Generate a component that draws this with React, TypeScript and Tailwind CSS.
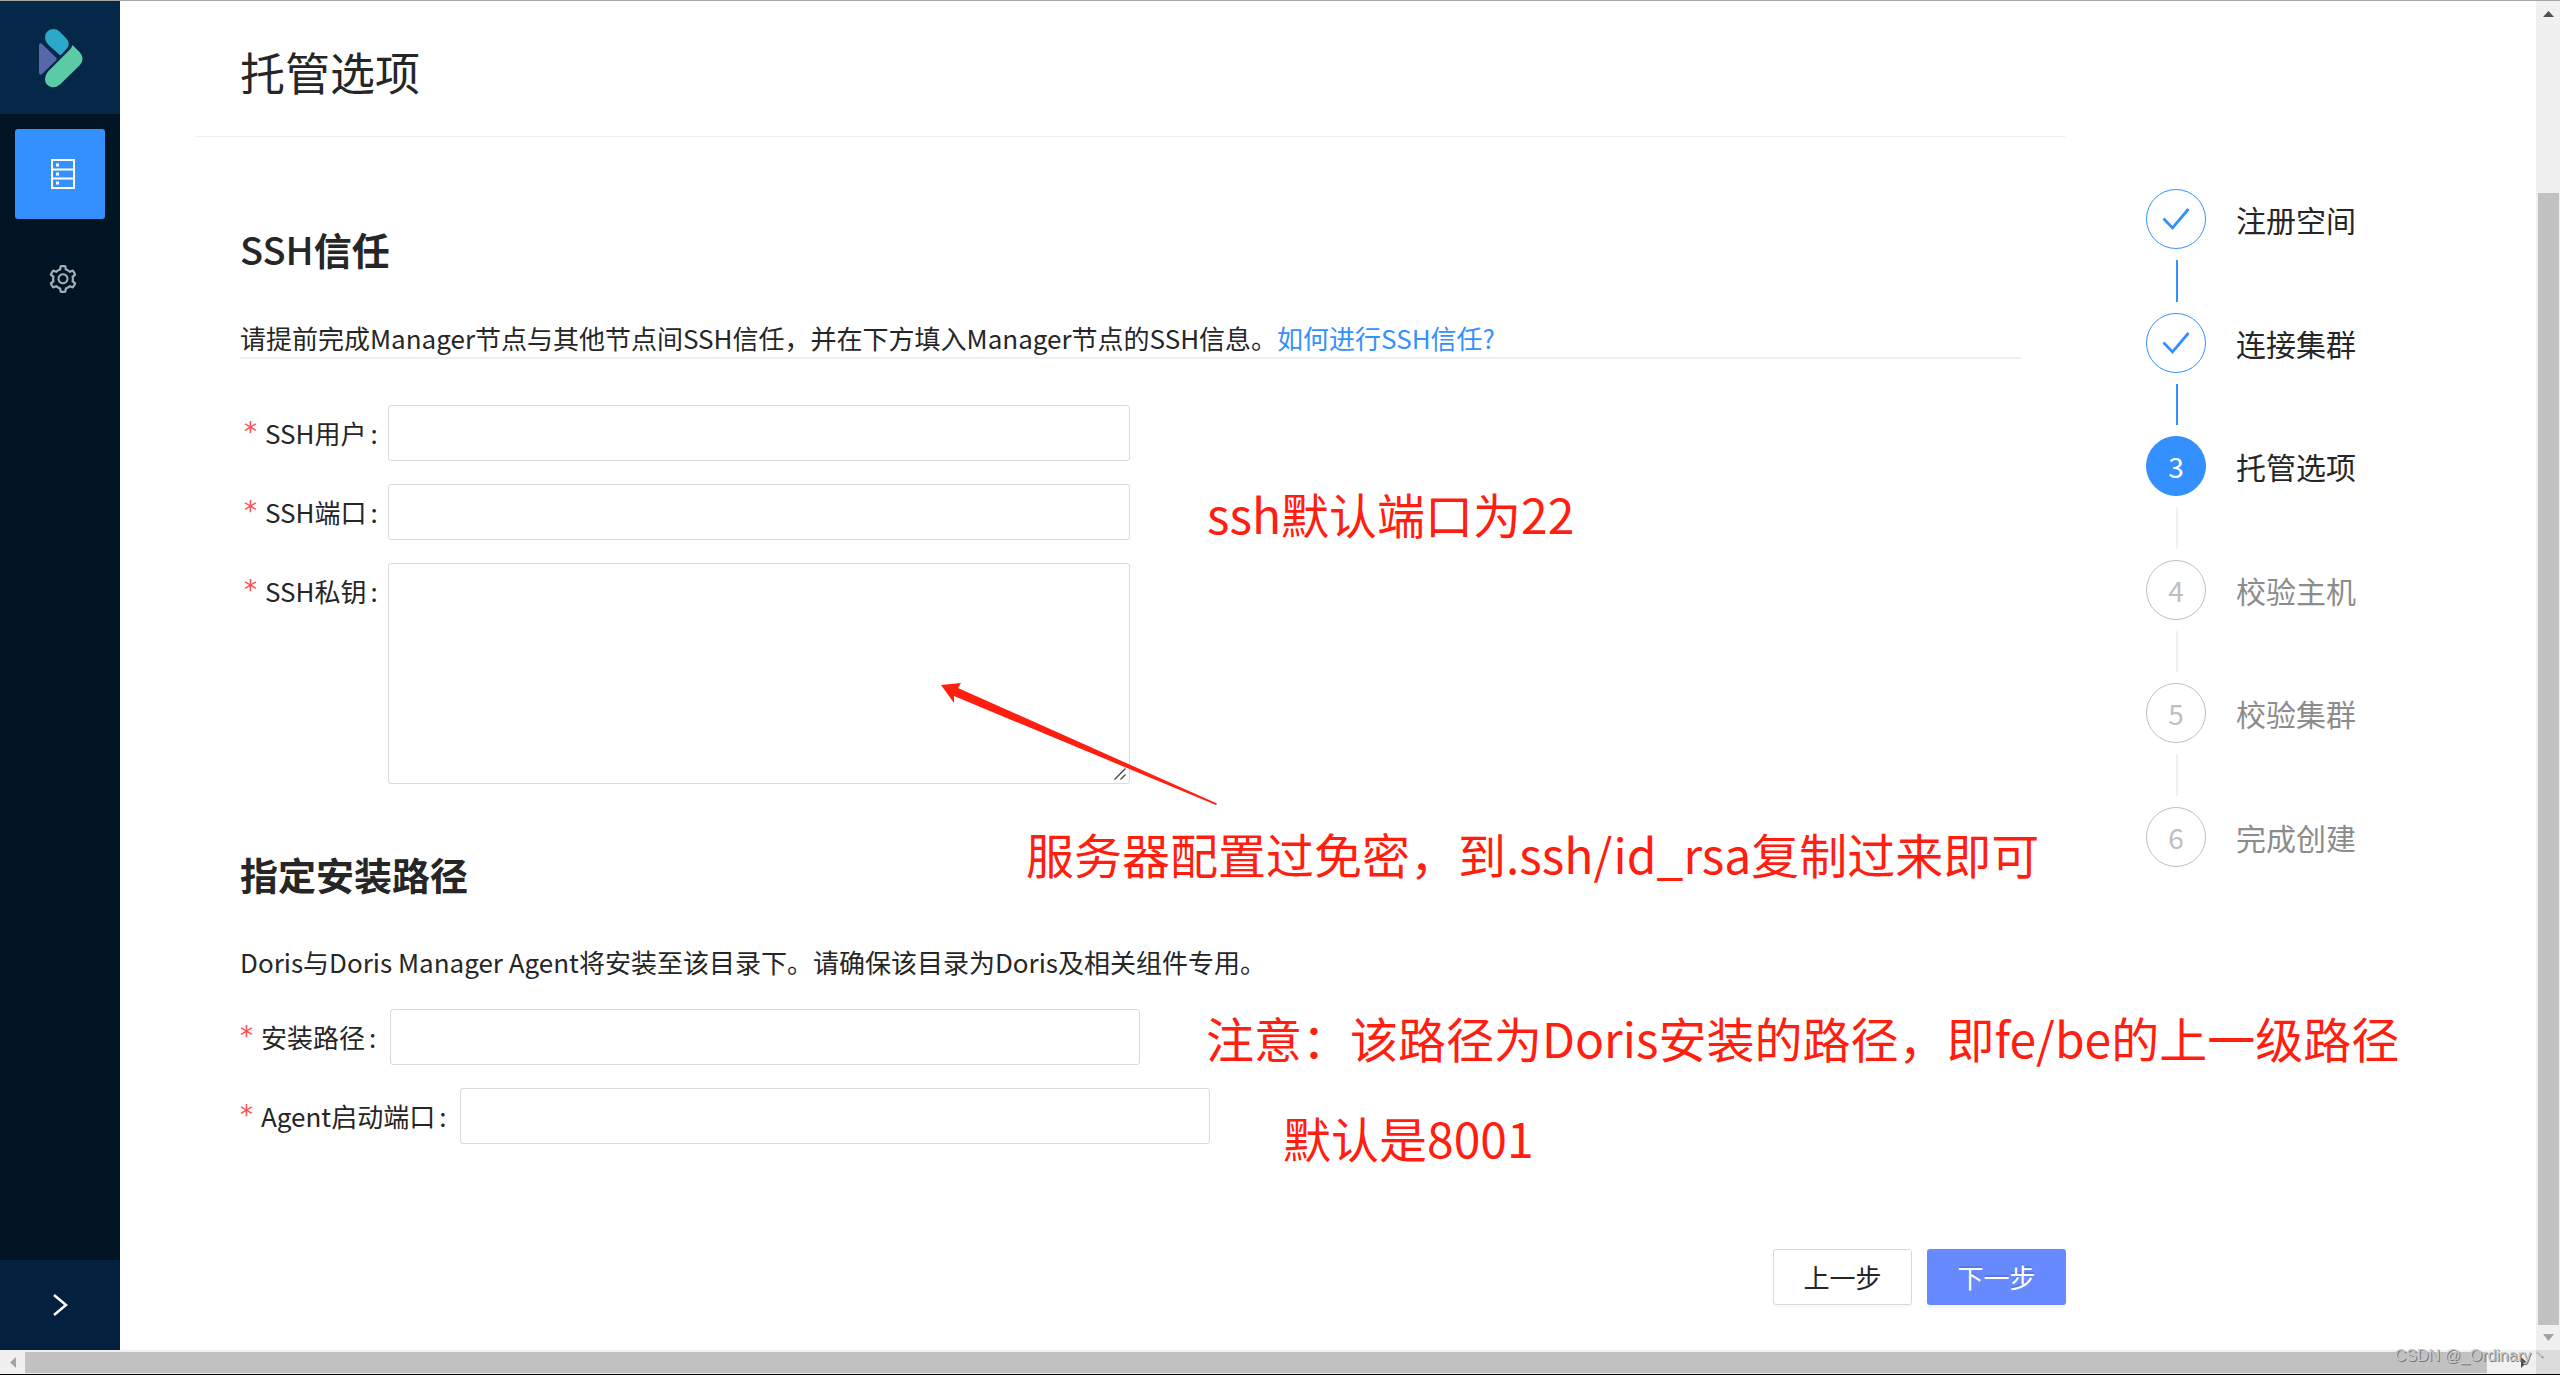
import React from "react";

type StepState = "done" | "active" | "wait";

const steps: { title: string; state: StepState }[] = [
  { title: "注册空间", state: "done" },
  { title: "连接集群", state: "done" },
  { title: "托管选项", state: "active" },
  { title: "校验主机", state: "wait" },
  { title: "校验集群", state: "wait" },
  { title: "完成创建", state: "wait" },
];

const circleStyles: Record<StepState, string> = {
  done: "border-[#3490ff] bg-white text-[#3490ff]",
  active: "border-[#3490ff] bg-[#3490ff] text-white",
  wait: "border-[#bfbfbf] bg-white text-[#bfbfbf]",
};

function Logo() {
  return (
    <svg className="h-[60px] w-[46px]" viewBox="0 0 46 60" aria-hidden="true">
      <path d="M2 18Q2 14 5 16L19 29.500Q20.500 31 19 32.500L5 46Q2 48 2 44Z" fill="#5668aa" />
      <path d="M12 17.500Q8 13.500 8 9Q9 1 17 1Q20 1 23 4L29 10Q34.500 16 29 21.500L23.500 27.500Z" fill="#2ba9cb" />
      <path d="M35.500 17L43 24.500Q48 31 43 37L23 56.500Q19 60 14 59Q8 57 8 51Q8 47 11 43.500L32 22.500Q35 19.500 35.500 17Z" fill="#5bcba5" />
    </svg>
  );
}

function ServerIcon() {
  return (
    <svg className="h-[30px] w-6" viewBox="0 0 24 30" fill="none" stroke="#fff" strokeWidth="2" aria-hidden="true">
      <rect x="1" y="1" width="22" height="28" />
      <path d="M1 10.500H23M1 19.500H23" />
      <path d="M5 6H8M5 15H8M5 24H8" strokeWidth="3" />
    </svg>
  );
}

function GearIcon() {
  return (
    <svg className="size-8" viewBox="0 0 1024 1024" fill="#a6adb4" aria-hidden="true">
      <path d="M924.800 625.700l-65.500-56c3.100-19 4.700-38.400 4.700-57.800s-1.600-38.800-4.700-57.800l65.500-56a32.030 32.030 0 0 0 9.300-35.200l-.9-2.600a443.740 443.740 0 0 0-79.700-137.900l-1.800-2.100a32.120 32.120 0 0 0-35.100-9.500l-81.300 28.900c-30-24.600-63.500-44-99.700-57.600l-15.700-85a32.050 32.050 0 0 0-25.800-25.700l-2.700-.5c-52.100-9.400-106.900-9.400-159 0l-2.700.5a32.050 32.050 0 0 0-25.800 25.700l-15.800 85.400a351.860 351.860 0 0 0-99 57.400l-81.900-29.100a32 32 0 0 0-35.100 9.500l-1.800 2.100a446.020 446.020 0 0 0-79.700 137.900l-.9 2.600c-4.500 12.500-.8 26.500 9.300 35.200l66.300 56.600c-3.100 18.800-4.600 38-4.600 57.100 0 19.200 1.500 38.400 4.600 57.100L99 625.500a32.030 32.030 0 0 0-9.300 35.200l.9 2.600c18.100 50.400 44.900 96.900 79.700 137.900l1.800 2.100a32.120 32.120 0 0 0 35.100 9.500l81.900-29.100c29.800 24.500 63.100 43.900 99 57.400l15.800 85.400a32.050 32.050 0 0 0 25.800 25.700l2.700.5a449.400 449.400 0 0 0 159 0l2.700-.5a32.050 32.050 0 0 0 25.800-25.700l15.700-85a350 350 0 0 0 99.700-57.600l81.300 28.900a32 32 0 0 0 35.100-9.500l1.800-2.100c34.800-41.100 61.600-87.500 79.700-137.900l.9-2.600c4.500-12.300.8-26.300-9.300-35zM788.300 465.900c2.500 15.100 3.800 30.600 3.800 46.100s-1.300 31-3.800 46.100l-6.600 40.100 74.700 63.900a370.030 370.030 0 0 1-42.600 73.600L721 702.800l-31.400 25.800c-23.900 19.600-50.500 35-79.300 45.800l-38.100 14.300-17.900 97a377.500 377.500 0 0 1-85 0l-17.900-97.200-37.800-14.500c-28.500-10.800-55-26.200-78.700-45.700l-31.400-25.900-93.400 33.200c-17-22.900-31.200-47.600-42.600-73.600l75.500-64.500-6.500-40c-2.400-14.900-3.700-30.300-3.700-45.500 0-15.300 1.200-30.600 3.700-45.500l6.500-40-75.500-64.500c11.300-26.100 25.600-50.700 42.600-73.600l93.400 33.200 31.400-25.900c23.700-19.500 50.200-34.900 78.700-45.700l37.900-14.300 17.900-97.200c28.100-3.200 56.800-3.200 85 0l17.900 97 38.100 14.300c28.700 10.800 55.400 26.200 79.300 45.800l31.400 25.800 92.800-32.900c17 22.900 31.200 47.600 42.600 73.600L781.800 426l6.500 39.900zM512 326c-97.200 0-176 78.800-176 176s78.800 176 176 176 176-78.800 176-176-78.800-176-176-176zm79.200 255.200A111.600 111.600 0 0 1 512 614c-29.900 0-58-11.700-79.200-32.800A111.600 111.600 0 0 1 400 502c0-29.900 11.700-58 32.800-79.200C454 401.600 482.100 390 512 390c29.900 0 58 11.600 79.200 32.800A111.600 111.600 0 0 1 624 502c0 29.900-11.700 58-32.800 79.200z" />
    </svg>
  );
}

function FieldLabel({ htmlFor, text, className }: { htmlFor: string; text: string; className: string }) {
  return (
    <label htmlFor={htmlFor} className={"flex h-14 shrink-0 items-center pb-[2px] " + className}>
      <span className="mr-2 font-['DejaVu_Sans',sans-serif] text-[#ff4d4f]">*</span>
      <span className="whitespace-nowrap">{text}</span>
      <span className="ml-1">:</span>
    </label>
  );
}

const inputClass = "block h-14 rounded-[3px] border border-[#d9d9d9] bg-white px-4 outline-none";

function Note({ className, children }: { className: string; children: React.ReactNode }) {
  return (
    <p className={"absolute text-5xl leading-[64px] whitespace-nowrap text-[#ff1e10] " + className}>{children}</p>
  );
}

function Sidebar() {
  return (
    <aside className="flex w-[120px] shrink-0 flex-col bg-[#001424]">
      <div className="flex h-[113px] shrink-0 items-center justify-center bg-[#052849]">
        <Logo />
      </div>
      <nav className="flex flex-1 flex-col items-center gap-[15px] pt-[15px]">
        <button type="button" aria-label="集群" className="flex size-[90px] items-center justify-center rounded-[3px] bg-[#3490ff] pl-[6px]">
          <ServerIcon />
        </button>
        <button type="button" aria-label="设置" className="flex size-[90px] items-center justify-center pl-[6px]">
          <GearIcon />
        </button>
      </nav>
      <button type="button" aria-label="展开" className="flex h-[90px] shrink-0 items-center justify-center bg-[#03203e]">
        <svg className="h-[22px] w-4" viewBox="0 0 16 22" fill="none" stroke="#fff" strokeWidth="2.500" aria-hidden="true">
          <path d="M2 1L14 11L2 21" />
        </svg>
      </button>
    </aside>
  );
}

function Steps() {
  return (
    <ol className="mt-[188px] ml-20 flex h-[678px] w-[390px] shrink-0 flex-col">
      {steps.map((s, i) => (
        <li key={s.title} className="flex flex-col not-last:flex-1">
          <div className="flex items-center gap-[30px]">
            <span className={"flex size-[60px] items-center justify-center rounded-full border text-[28px] " + circleStyles[s.state]}>
              {s.state === "done" ? (
                <svg className="h-[24px] w-[28px]" viewBox="0 0 28 24" fill="none" stroke="currentColor" strokeWidth="2.800" aria-hidden="true">
                  <path d="M1.500 11.500L10.500 21L26.500 2" />
                </svg>
              ) : (
                <span>{i + 1}</span>
              )}
            </span>
            <span className={"text-[30px] leading-10 " + (s.state === "wait" ? "text-[#8c8c8c]" : "text-[#262626]")}>{s.title}</span>
          </div>
          {i < steps.length - 1 && (
            <span className={"my-[11px] ml-[30px] w-[2px] flex-1 " + (s.state === "done" ? "bg-[#3490ff]" : "bg-[#f0f0f0]")} />
          )}
        </li>
      ))}
    </ol>
  );
}

function HostingForm() {
  return (
    <form className="min-w-0 flex-1" onSubmit={(e) => e.preventDefault()}>
      <h1 className="flex h-[136px] items-center border-b border-[#f0f0f0] pt-[6px] pl-[45px] text-[45px] leading-[60px]">托管选项</h1>
      <section className="mt-[84px] px-[45px]">
        <h2 className="text-[38px] leading-[56px] font-bold">
          <span className="font-medium">SSH</span>信任
        </h2>
        <p className="mt-[41px] h-[41px] border-b-2 border-[#f0f0f0] leading-10 whitespace-nowrap">
          请提前完成Manager节点与其他节点间SSH信任，并在下方填入Manager节点的SSH信息。
          <a href="#ssh" className="text-[#3490ff]">如何进行SSH信任?</a>
        </p>
        <div className="mt-[46px] flex flex-col gap-[23px]">
          <div className="flex">
            <FieldLabel htmlFor="ssh-user" text="SSH用户" className="w-[148px] pl-1" />
            <input id="ssh-user" type="text" className={inputClass + " w-[742px]"} />
          </div>
          <div className="flex">
            <FieldLabel htmlFor="ssh-port" text="SSH端口" className="w-[148px] pl-1" />
            <input id="ssh-port" type="text" className={inputClass + " w-[742px]"} />
          </div>
          <div className="flex">
            <FieldLabel htmlFor="ssh-key" text="SSH私钥" className="w-[148px] pl-1" />
            <div className="relative">
              <textarea id="ssh-key" className="block h-[221px] w-[742px] resize-none rounded-[3px] border border-[#d9d9d9] bg-white p-4 outline-none" />
              <svg className="absolute right-1 bottom-1 size-3" viewBox="0 0 12 12" stroke="#444" strokeWidth="1.400" aria-hidden="true">
                <path d="M0.500 11.500L11.500 0.500M6.500 11.500L11.500 6.500" />
              </svg>
            </div>
          </div>
        </div>
      </section>
      <section className="mt-[62px] px-[45px]">
        <h2 className="text-[38px] leading-[56px] font-bold">指定安装路径</h2>
        <p className="mt-[40px] leading-10 whitespace-nowrap">Doris与Doris Manager Agent将安装至该目录下。请确保该目录为Doris及相关组件专用。</p>
        <div className="mt-[27px] flex flex-col gap-[23px]">
          <div className="flex">
            <FieldLabel htmlFor="install-path" text="安装路径" className="w-[150px]" />
            <input id="install-path" type="text" className={inputClass + " w-[750px]"} />
          </div>
          <div className="flex">
            <FieldLabel htmlFor="agent-port" text="Agent启动端口" className="w-[220px]" />
            <input id="agent-port" type="text" className={inputClass + " w-[750px]"} />
          </div>
        </div>
      </section>
      <div className="mt-[105px] flex justify-end gap-[15px]">
        <button type="button" className="h-14 w-[139px] rounded-[3px] border border-[#d9d9d9] bg-white pb-[2px] shadow-[0_3px_0_rgba(0,0,0,0.02)]">上一步</button>
        <button type="submit" className="h-14 w-[139px] rounded-[3px] bg-[#678bff] pb-[2px] text-white shadow-[0_3px_0_rgba(0,0,0,0.04)] [text-shadow:0_-2px_0_rgba(0,0,0,0.12)]">下一步</button>
      </div>
    </form>
  );
}

function Notes() {
  return (
    <div className="pointer-events-none">
      <Note className="top-[480px] left-[1087px]">ssh默认端口为22</Note>
      <Note className="top-[820px] left-[906px]">服务器配置过免密，到.ssh/id_rsa复制过来即可</Note>
      <Note className="top-[1004px] left-[1086px]">注意：该路径为Doris安装的路径，即fe/be的上一级路径</Note>
      <Note className="top-[1104px] left-[1163px]">默认是8001</Note>
      <svg className="absolute top-[679px] left-[820px] h-[126px] w-[278px]" viewBox="0 0 278 126" fill="#ff1e10" aria-hidden="true">
        <path d="M1 5L21 3L18 8L277 123.500L276 125L14 16L14 23Z" />
      </svg>
    </div>
  );
}

function VerticalScrollbar() {
  return (
    <div className="flex w-6 shrink-0 flex-col items-center bg-[#f0f0f0]">
      <svg className="mt-[10px] h-[6px] w-[11px] shrink-0" viewBox="0 0 11 6" fill="#505050" aria-hidden="true">
        <path d="M0 6L5.500 0L11 6Z" />
      </svg>
      <div className="mt-[176px] w-[21px] flex-1 bg-[#c1c1c1]" />
      <svg className="mt-[9px] mb-[9px] h-[7px] w-[11px] shrink-0" viewBox="0 0 11 7" fill="#a3a3a3" aria-hidden="true">
        <path d="M0 0L5.500 7L11 0Z" />
      </svg>
    </div>
  );
}

function HorizontalScrollbar() {
  return (
    <div className="flex h-6 shrink-0 bg-[#f0f0f0]">
      <div className="flex w-[25px] items-center justify-center">
        <svg className="h-[11px] w-[6px]" viewBox="0 0 6 11" fill="#a3a3a3" aria-hidden="true">
          <path d="M6 0L0 5.500L6 11Z" />
        </svg>
      </div>
      <div className="mt-[2px] h-[21px] flex-1 bg-[#c1c1c1]" />
      <div className="flex w-[49px] items-center justify-end pr-[9px]">
        <svg className="h-[11px] w-[6px]" viewBox="0 0 6 11" fill="#505050" aria-hidden="true">
          <path d="M0 0L6 5.500L0 11Z" />
        </svg>
      </div>
      <div className="w-6 bg-[#dcdcdc]" />
    </div>
  );
}

export default function App() {
  return (
    <div className="relative flex min-h-screen flex-col overflow-hidden border-t border-b border-t-[#a6a6a6] border-b-black bg-white font-['Noto_Sans_CJK_SC',sans-serif] text-[26px] text-[#262626]">
      <div className="flex flex-1">
        <Sidebar />
        <main className="relative flex min-w-0 flex-1 pl-[75px]">
          <HostingForm />
          <Steps />
          <Notes />
        </main>
        <VerticalScrollbar />
      </div>
      <HorizontalScrollbar />
      <span className="absolute right-[13px] bottom-[6px] font-['Liberation_Sans','Noto_Sans_CJK_SC',sans-serif] text-base leading-6 text-[#c8c8c8] [text-shadow:1px_1px_0_#777]">CSDN @_Ordinary丶</span>
    </div>
  );
}
